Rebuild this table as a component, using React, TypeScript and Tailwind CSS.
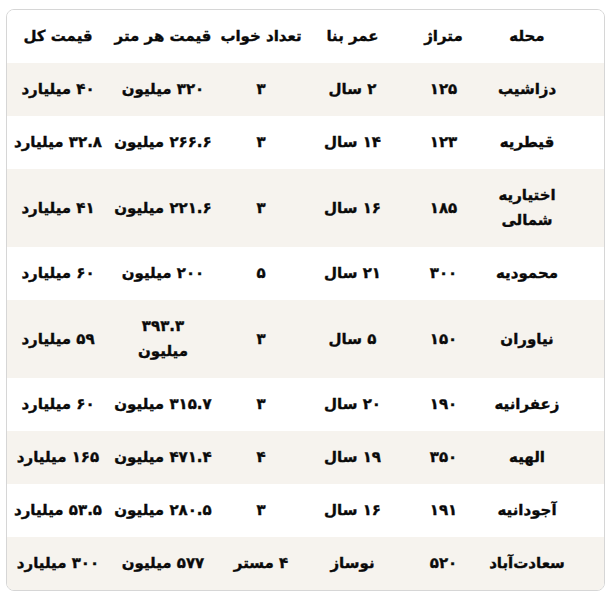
const headers = ['محله', 'متراژ', 'عمر بنا', 'تعداد خواب', 'قیمت هر متر', 'قیمت کل']

const rows: string[][] = [
    ['دزاشیب', '۱۲۵', '۲ سال', '۳', '۳۲۰ میلیون', '۴۰ میلیارد'],
    ['قیطریه', '۱۲۳', '۱۴ سال', '۳', '۲۶۶.۶ میلیون', '۳۲.۸ میلیارد'],
    ['اختیاریه\nشمالی', '۱۸۵', '۱۶ سال', '۳', '۲۲۱.۶ میلیون', '۴۱ میلیارد'],
    ['محمودیه', '۳۰۰', '۲۱ سال', '۵', '۲۰۰ میلیون', '۶۰ میلیارد'],
    ['نیاوران', '۱۵۰', '۵ سال', '۳', '۳۹۳.۳\nمیلیون', '۵۹ میلیارد'],
    ['زعفرانیه', '۱۹۰', '۲۰ سال', '۳', '۳۱۵.۷ میلیون', '۶۰ میلیارد'],
    ['الهیه', '۳۵۰', '۱۹ سال', '۴', '۴۷۱.۴ میلیون', '۱۶۵ میلیارد'],
    ['آجودانیه', '۱۹۱', '۱۶ سال', '۳', '۲۸۰.۵ میلیون', '۵۳.۵ میلیارد'],
    ['سعادت‌آباد', '۵۲۰', 'نوساز', '۴ مستر', '۵۷۷ میلیون', '۳۰۰ میلیارد'],
]

// rtl: first column sits on the right
const gridCols = 'grid grid-cols-[80px_87px_95px_88px_108px_1fr] pr-[37px]'

function Cell({ text }: { text: string }) {
    return (
        <div className="flex items-center justify-center text-center whitespace-pre-line leading-[25px]">
            {text}
        </div>
    )
}

export default function App() {
    return (
        <div className="bg-white min-h-[604px] w-[616px] pt-[9px] pl-[6px]">
            <div
                dir="rtl"
                className="w-[599px] overflow-hidden rounded-lg border border-[#d6d6d6] text-[15px] font-bold text-[#0a0a0a] [-webkit-text-stroke:0.35px_#0a0a0a]"
                style={{ fontFamily: '"DejaVu Sans", "Noto Sans", sans-serif' }}
            >
                <div className={`${gridCols} bg-white py-[14px]`}>
                    {headers.map((h) => (
                        <Cell key={h} text={h} />
                    ))}
                </div>
                {rows.map((row, i) => (
                    <div
                        key={row[0]}
                        className={`${gridCols} py-[14px] ${i % 2 === 0 ? 'bg-[#f6f3ee]' : 'bg-white'}`}
                    >
                        {row.map((c, j) => (
                            <Cell key={j} text={c} />
                        ))}
                    </div>
                ))}
            </div>
        </div>
    )
}
